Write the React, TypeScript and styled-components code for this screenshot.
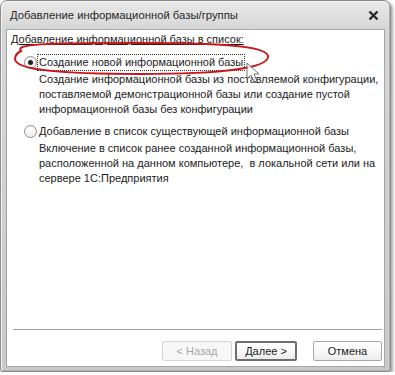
import React from 'react';
import styled, { createGlobalStyle } from 'styled-components';

const GlobalStyle = createGlobalStyle`
  html, body {
    margin: 0;
    padding: 0;
    background: #ffffff;
  }
  body {
    font-family: 'Liberation Sans', Arial, sans-serif;
    font-size: 11px;
    color: #1b1b1b;
  }
`;

const Window = styled.div`
  position: relative;
  box-sizing: border-box;
  width: 391px;
  height: 372px;
  display: flex;
  flex-direction: column;
  padding: 0 5px 4px 5px;
  border: 1px solid #8c8c8c;
  border-radius: 7px 7px 2px 2px;
  background: linear-gradient(to bottom, #e9e9e9 0px, #d6d6d6 28px, #c9c9c9 100%);
  box-shadow: 2px 2px 3px rgba(0, 0, 0, 0.35), inset 1px 1px 0 #f4f4f4,
    inset -1px -1px 0 #b0b0b0;
`;

const TitleBar = styled.div`
  height: 28px;
  display: flex;
  align-items: center;
  justify-content: space-between;
  padding: 0 6px 0 4px;
  color: #2a2a2a;
  font-size: 11.3px;
`;

const Client = styled.div`
  flex: 1;
  display: flex;
  flex-direction: column;
  background: #ffffff;
  border: 1px solid #a5a5a5;
  padding: 2px 2px 5px 4px;
`;

const Heading = styled.div`
  line-height: 15px;
  text-decoration: underline;
  text-underline-offset: 1px;
`;

const Option = styled.div<{ top: number }>`
  display: flex;
  flex-direction: column;
  padding-left: 13px;
  margin-top: ${(p) => p.top}px;
`;

const OptionRow = styled.div`
  display: flex;
  align-items: center;
  height: 17px;
`;

const Radio = styled.span<{ checked?: boolean }>`
  box-sizing: border-box;
  width: 13px;
  height: 13px;
  border-radius: 50%;
  border: 1px solid #8f8f8f;
  background: radial-gradient(circle at 40% 35%, #ffffff 0%, #f0f0f0 60%, #dcdcdc 100%);
  display: flex;
  align-items: center;
  justify-content: center;
  &::after {
    content: '';
    width: 5px;
    height: 5px;
    border-radius: 50%;
    background: #202020;
    display: ${(p) => (p.checked ? 'block' : 'none')};
  }
`;

const OptionLabel = styled.span<{ focused?: boolean }>`
  line-height: 15px;
  padding: 0 1px;
  border: 1px ${(p) => (p.focused ? 'dotted #333' : 'solid transparent')};
`;

const Description = styled.div`
  padding-left: 15px;
  margin-top: 1px;
  line-height: 15px;
  white-space: nowrap;
`;

const Spacer = styled.div`
  flex: 1;
`;

const Separator = styled.div`
  height: 1px;
  background: #a0a0a0;
  margin: 0 0 11px 2px;
`;

const ButtonRow = styled.div`
  display: flex;
  justify-content: flex-end;
`;

const Button = styled.button<{ w: number; variant?: 'default' | 'disabled' }>`
  box-sizing: border-box;
  width: ${(p) => p.w}px;
  height: 20px;
  margin-left: ${(p) => (p.variant === 'default' ? 3 : p.variant === undefined ? 16 : 0)}px;
  font-family: 'Liberation Sans', Arial, sans-serif;
  font-size: 11px;
  padding: 0;
  border-radius: 2px;
  color: ${(p) => (p.variant === 'disabled' ? '#a8a8a8' : '#1b1b1b')};
  border: ${(p) =>
    p.variant === 'default'
      ? '2px solid #6e6e6e'
      : p.variant === 'disabled'
      ? '1px solid #d6d6d6'
      : '1px solid #a8a8a8'};
  background: ${(p) =>
    p.variant === 'disabled'
      ? '#f7f7f7'
      : 'linear-gradient(to bottom, #ffffff 0%, #f6f6f6 60%, #ececec 100%)'};
`;

const Overlay = styled.svg`
  position: absolute;
  left: 0;
  top: 0;
  pointer-events: none;
`;

export default function App() {
  return (
    <>
      <GlobalStyle />
      <Window>
        <TitleBar>
          <span>Добавление информационной базы/группы</span>
          <svg width="11" height="11" viewBox="0 0 11 11">
            <path d="M1.5 1.5 L9.5 9.5 M9.5 1.5 L1.5 9.5" stroke="#2b2b2b" strokeWidth="2.4" />
          </svg>
        </TitleBar>
        <Client>
          <Heading>Добавление информационной базы в список:</Heading>
          <Option top={7}>
            <OptionRow>
              <Radio checked />
              <OptionLabel focused>Создание новой информационной базы</OptionLabel>
            </OptionRow>
            <Description>
              Создание информационной базы из поставляемой конфигурации,
              <br />
              поставляемой демонстрационной базы или создание пустой
              <br />
              информационной базы без конфигурации
            </Description>
          </Option>
          <Option top={6}>
            <OptionRow>
              <Radio />
              <OptionLabel>Добавление в список существующей информационной базы</OptionLabel>
            </OptionRow>
            <Description>
              Включение в список ранее созданной информационной базы,
              <br />
              расположенной на данном компьютере, &nbsp;в локальной сети или на
              <br />
              сервере 1С:Предприятия
            </Description>
          </Option>
          <Spacer />
          <Separator />
          <ButtonRow>
            <Button w={70} variant="disabled">&lt; Назад</Button>
            <Button w={62} variant="default">Далее &gt;</Button>
            <Button w={69}>Отмена</Button>
          </ButtonRow>
        </Client>
        <Overlay width="280" height="90" viewBox="0 0 280 90">
          <path
            d="M20 50 C 14 43, 40 42, 140 42 C 230 42, 268 46, 267 56 C 266 67, 220 73, 140 73 C 60 73, 14 69, 14 58 C 14 55, 16 52, 20 50 Z"
            fill="none"
            stroke="#c8161d"
            strokeWidth="2"
          />
          <path
            d="M246 62 L246 78 L250 74 L253 81 L256 80 L253 73 L258 73 Z"
            fill="#ffffff"
            stroke="#555"
            strokeWidth="1"
            strokeLinejoin="round"
            opacity="0.8"
          />
        </Overlay>
      </Window>
    </>
  );
}
